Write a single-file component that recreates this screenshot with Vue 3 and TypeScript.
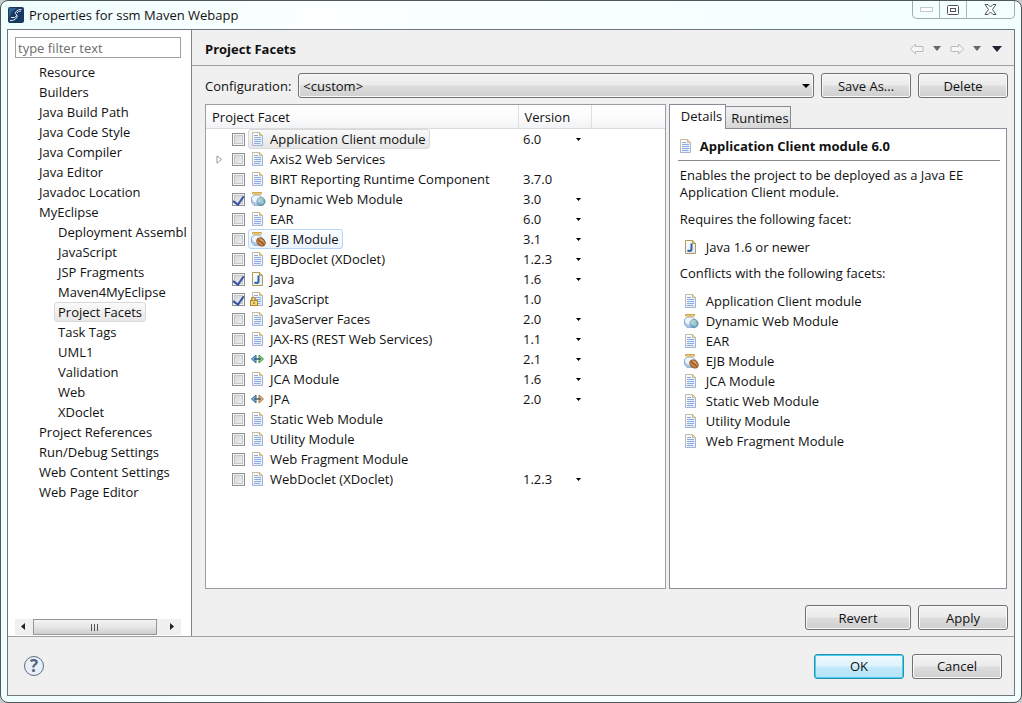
<script setup lang="ts">
import { ref } from 'vue'

interface TreeItem { name: string; level: 1 | 2; selected?: boolean }
interface Facet {
  name: string
  icon: string
  version?: string
  choice?: boolean
  checked?: boolean
  expandable?: boolean
  mark?: 'selected' | 'hover'
}

const tree: TreeItem[] = [
  { name: 'Resource', level: 1 },
  { name: 'Builders', level: 1 },
  { name: 'Java Build Path', level: 1 },
  { name: 'Java Code Style', level: 1 },
  { name: 'Java Compiler', level: 1 },
  { name: 'Java Editor', level: 1 },
  { name: 'Javadoc Location', level: 1 },
  { name: 'MyEclipse', level: 1 },
  { name: 'Deployment Assembl', level: 2 },
  { name: 'JavaScript', level: 2 },
  { name: 'JSP Fragments', level: 2 },
  { name: 'Maven4MyEclipse', level: 2 },
  { name: 'Project Facets', level: 2, selected: true },
  { name: 'Task Tags', level: 2 },
  { name: 'UML1', level: 2 },
  { name: 'Validation', level: 2 },
  { name: 'Web', level: 2 },
  { name: 'XDoclet', level: 2 },
  { name: 'Project References', level: 1 },
  { name: 'Run/Debug Settings', level: 1 },
  { name: 'Web Content Settings', level: 1 },
  { name: 'Web Page Editor', level: 1 },
]

const facets = ref<Facet[]>([
  { name: 'Application Client module', icon: 'doc', version: '6.0', choice: true, mark: 'selected' },
  { name: 'Axis2 Web Services', icon: 'doc', expandable: true },
  { name: 'BIRT Reporting Runtime Component', icon: 'doc', version: '3.7.0' },
  { name: 'Dynamic Web Module', icon: 'web', version: '3.0', choice: true, checked: true },
  { name: 'EAR', icon: 'doc', version: '6.0', choice: true },
  { name: 'EJB Module', icon: 'ejb', version: '3.1', choice: true, mark: 'hover' },
  { name: 'EJBDoclet (XDoclet)', icon: 'doc', version: '1.2.3', choice: true },
  { name: 'Java', icon: 'java', version: '1.6', choice: true, checked: true },
  { name: 'JavaScript', icon: 'lock', version: '1.0', checked: true },
  { name: 'JavaServer Faces', icon: 'doc', version: '2.0', choice: true },
  { name: 'JAX-RS (REST Web Services)', icon: 'doc', version: '1.1', choice: true },
  { name: 'JAXB', icon: 'jaxb', version: '2.1', choice: true },
  { name: 'JCA Module', icon: 'doc', version: '1.6', choice: true },
  { name: 'JPA', icon: 'jpa', version: '2.0', choice: true },
  { name: 'Static Web Module', icon: 'doc' },
  { name: 'Utility Module', icon: 'doc' },
  { name: 'Web Fragment Module', icon: 'doc' },
  { name: 'WebDoclet (XDoclet)', icon: 'doc', version: '1.2.3', choice: true },
])

const conflicts = [
  { name: 'Application Client module', icon: 'doc' },
  { name: 'Dynamic Web Module', icon: 'web' },
  { name: 'EAR', icon: 'doc' },
  { name: 'EJB Module', icon: 'ejb' },
  { name: 'JCA Module', icon: 'doc' },
  { name: 'Static Web Module', icon: 'doc' },
  { name: 'Utility Module', icon: 'doc' },
  { name: 'Web Fragment Module', icon: 'doc' },
]

const filter = ref('')
</script>

<template>
  <svg class="sprite" aria-hidden="true">
    <defs>
      <linearGradient id="page" x1="0" y1="0" x2="1" y2="1">
        <stop offset="0" stop-color="#ffffff" /><stop offset="1" stop-color="#dce8f8" />
      </linearGradient>
      <radialGradient id="globe" cx=".35" cy=".3" r=".8">
        <stop offset="0" stop-color="#d8eef4" /><stop offset="1" stop-color="#4481a8" />
      </radialGradient>
      <symbol id="i-doc" viewBox="0 0 16 16">
        <path d="M2.5 1.5h7l3 3v10h-10z" fill="url(#page)" stroke="#a3b4d2" />
        <path d="M2.5 11V1.5h7" fill="none" stroke="#c6be9c" />
        <path d="M9.5 1.5v3h3z" fill="#f0e0ae" stroke="#cdba83" />
        <path d="M4 4.500h4M4 6.500h7M4 8.500h7M4 10.500h7M4 12.500h6" stroke="#8aaae0" />
      </symbol>
      <symbol id="i-jar" viewBox="0 0 16 16">
        <path d="M4.500 4L1.500 6.500v5l2.500 3h6l2-2v-6L9.500 4z" fill="#eef5fc" stroke="#8fa9c8" />
        <path d="M2 9l2 2 3 1 2 2.500H4.500L2 12z" fill="#a5c4e6" />
        <path d="M2.500 1.500h9v1.500h-9z" fill="#f9e7b4" stroke="#cfa74f" />
        <path d="M4.500 3.500h5" stroke="#dcb765" />
      </symbol>
      <symbol id="i-web" viewBox="0 0 16 16">
        <use href="#i-jar" />
        <circle cx="11" cy="10.500" r="4.200" fill="url(#globe)" stroke="#6796ad" stroke-width=".7" />
        <path d="M8.500 8.500l2-1.500 2 .5-1 2-2 .5zM11 12l2-1.500 1 .5-1.500 2.500z" fill="#a4d1b6" />
      </symbol>
      <symbol id="i-ejb" viewBox="0 0 16 16">
        <use href="#i-jar" />
        <ellipse cx="11" cy="11" rx="4.600" ry="3.500" transform="rotate(38 11 11)" fill="#c98546" stroke="#8f5a2e" />
        <path d="M8 8.500c1 2.500 4 1.500 5.500 5" fill="none" stroke="#6b3d20" />
        <path d="M10.500 8.300l2.700 2" stroke="#efbb82" />
      </symbol>
      <symbol id="i-java" viewBox="0 0 16 16">
        <path d="M2.500 1.500h7l3 3v10h-10z" fill="url(#page)" stroke="#b39a50" />
        <path d="M9.500 1.500v3h3z" fill="#e8d28f" stroke="#b39a50" />
        <path d="M8.500 4.500v5.300q0 2.200-1.900 2.200-1.300 0-2.100-.8" fill="none" stroke="#2d64a7" stroke-width="2" />
      </symbol>
      <symbol id="i-lock" viewBox="0 0 16 16">
        <use href="#i-doc" />
        <path d="M1.500 10V8.500Q1.500 6.500 3.500 6.500t2 2V10" fill="none" stroke="#b48a2a" stroke-width="1.300" />
        <rect x=".5" y="9.500" width="7" height="5" fill="#f5d675" stroke="#b48a2a" />
        <path d="M4 11v2" stroke="#765510" />
      </symbol>
      <symbol id="i-jaxb" viewBox="0 0 16 16">
        <path d="M6 4v8L1.500 8z" fill="#7fb2e4" stroke="#35688d" />
        <path d="M9 4v8l4.500-4z" fill="#8fd68a" stroke="#3b9346" />
        <path d="M4 8h7" stroke="#2f5c7c" stroke-width="1.500" />
      </symbol>
      <symbol id="i-jpa" viewBox="0 0 16 16">
        <path d="M6 4v8L1.500 8z" fill="#7fb2e4" stroke="#35688d" />
        <path d="M9 4v8l4.500-4z" fill="#e3bd84" stroke="#a7743c" />
        <path d="M4 8h7" stroke="#515f6b" stroke-width="1.500" />
      </symbol>
      <symbol id="i-back" viewBox="0 0 16 12">
        <path d="M1.500 6l5-5v2.500H14v5H6.500V11z" fill="#f7f7f7" stroke="#b9b9b9" />
      </symbol>
    </defs>
  </svg>

  <div class="window">
    <header class="titlebar">
      <svg class="logo" viewBox="0 0 16 16" aria-hidden="true">
        <rect width="16" height="16" rx="2" fill="#173963" />
        <path d="M1 1h8Q2 5 1 12z" fill="#315f91" />
        <path d="M13.500 2.500Q10 2 8 4.500T9 8q1 2-1.500 4T2 13.500M3 10.500q4 1 6-2M13 4q-3 0-4 2" fill="none" stroke="#dce9f4" />
      </svg>
      <h1>Properties for ssm Maven Webapp</h1>
      <div class="captions">
        <button class="cap" type="button" aria-label="Minimize" disabled>
          <svg width="13" height="5" viewBox="0 0 13 5"><rect x=".5" y=".5" width="12" height="4" fill="#fff" stroke="#c3cccd" /></svg>
        </button>
        <button class="cap" type="button" aria-label="Maximize">
          <svg width="12" height="10" viewBox="0 0 12 10"><rect x=".5" y=".5" width="11" height="9" rx="1" fill="#fff" stroke="#4d5558" /><rect x="3.500" y="3.500" width="5" height="3" fill="#fff" stroke="#4d5558" /></svg>
        </button>
        <button class="cap close" type="button" aria-label="Close">
          <svg width="13" height="11" viewBox="0 0 13 11"><path d="M1 .5h3L6.500 3 9 .5h3L8.500 5.500l3.500 5H9L6.500 8 4 10.500H1l3.500-5z" fill="#fff" stroke="#4d5558" /></svg>
        </button>
      </div>
    </header>

    <div class="frame">
      <div class="upper">
        <aside class="side">
          <input v-model="filter" class="filter" type="text" placeholder="type filter text" aria-label="Filter" />
          <ul class="tree" role="tree">
            <li v-for="item in tree" :key="item.name" role="treeitem" :aria-selected="!!item.selected" :class="{ deep: item.level === 2 }">
              <span :class="{ current: item.selected }">{{ item.name }}</span>
            </li>
          </ul>
          <div class="scroll" aria-hidden="true">
            <svg width="18" height="15" viewBox="0 0 18 15"><path d="M10 4v7L6 7.500z" fill="#222" /></svg>
            <div class="thumb"><i></i><i></i><i></i></div>
            <svg width="18" height="15" viewBox="0 0 18 15"><path d="M7 4v7l4-3.500z" fill="#222" /></svg>
          </div>
        </aside>

        <main class="page">
          <div class="heading">
            <h2>Project Facets</h2>
            <div class="nav">
              <button type="button" aria-label="Back"><svg width="16" height="12"><use href="#i-back" /></svg></button>
              <button type="button" aria-label="Back history"><svg width="8" height="5" viewBox="0 0 8 5"><path d="M0 0h8L4 5z" fill="#666" /></svg></button>
              <button type="button" aria-label="Forward"><svg class="flip" width="16" height="12"><use href="#i-back" /></svg></button>
              <button type="button" aria-label="Forward history"><svg width="8" height="5" viewBox="0 0 8 5"><path d="M0 0h8L4 5z" fill="#666" /></svg></button>
              <button type="button" aria-label="Menu"><svg width="10" height="6" viewBox="0 0 10 6"><path d="M0 0h10L5 6z" fill="#222233" /></svg></button>
            </div>
          </div>

          <div class="config">
            <label for="configuration">Configuration:</label>
            <div class="combo">
              <select id="configuration"><option>&lt;custom&gt;</option></select>
              <svg width="8" height="4" viewBox="0 0 8 4" aria-hidden="true"><path d="M0 0h8L4 4z" fill="#000" /></svg>
            </div>
            <button class="btn" type="button">Save As...</button>
            <button class="btn" type="button">Delete</button>
          </div>

          <div class="panes">
            <section class="facets">
              <table>
                <colgroup><col class="c-name" /><col class="c-version" /><col /></colgroup>
                <thead>
                  <tr><th scope="col">Project Facet</th><th scope="col">Version</th><td></td></tr>
                </thead>
                <tbody>
                  <tr v-for="(f, i) in facets" :key="f.name">
                    <td>
                      <div class="cell">
                        <button v-if="f.expandable" class="expander" type="button" aria-label="Expand">
                          <svg width="7" height="9" viewBox="0 0 7 9"><path d="M1 .8v7.400L5.500 4.500z" fill="#fff" stroke="#999" /></svg>
                        </button>
                        <span v-else class="expander"></span>
                        <input :id="'facet' + i" v-model="f.checked" type="checkbox" />
                        <label :for="'facet' + i" :class="f.mark">
                          <svg width="16" height="16" aria-hidden="true"><use :href="'#i-' + f.icon" /></svg>
                          <span>{{ f.name }}</span>
                        </label>
                      </div>
                    </td>
                    <td>
                      <div v-if="f.choice" class="version">
                        <select :aria-label="f.name + ' version'"><option>{{ f.version }}</option></select>
                        <svg width="5" height="3" viewBox="0 0 5 3" aria-hidden="true"><path d="M0 0h5L2.500 3z" fill="#000" /></svg>
                      </div>
                      <span v-else>{{ f.version }}</span>
                    </td>
                    <td></td>
                  </tr>
                </tbody>
              </table>
            </section>

            <section class="info">
              <div class="tabs" role="tablist">
                <button class="tab active" type="button" role="tab" aria-selected="true">Details</button>
                <button class="tab" type="button" role="tab" aria-selected="false">Runtimes</button>
              </div>
              <div class="details" role="tabpanel">
                <h3><svg width="16" height="16" aria-hidden="true"><use href="#i-doc" /></svg>Application Client module 6.0</h3>
                <p>Enables the project to be deployed as a Java EE Application Client module.</p>
                <p>Requires the following facet:</p>
                <ul>
                  <li><svg width="16" height="16" aria-hidden="true"><use href="#i-java" /></svg>Java 1.6 or newer</li>
                </ul>
                <p>Conflicts with the following facets:</p>
                <ul>
                  <li v-for="c in conflicts" :key="c.name">
                    <svg width="16" height="16" aria-hidden="true"><use :href="'#i-' + c.icon" /></svg>{{ c.name }}
                  </li>
                </ul>
              </div>
            </section>
          </div>

          <div class="actions">
            <button class="btn wide" type="button">Revert</button>
            <button class="btn" type="button">Apply</button>
          </div>
        </main>
      </div>

      <footer class="footer">
        <button class="help" type="button" aria-label="Help">?</button>
        <button class="btn primary" type="button">OK</button>
        <button class="btn" type="button">Cancel</button>
      </footer>
    </div>
  </div>
</template>

<style>
body {
  background: #c8cccc;
}
</style>

<style scoped>
* {
  box-sizing: border-box;
}

.sprite {
  position: absolute;
  width: 0;
  height: 0;
}

.window {
  display: flex;
  flex-direction: column;
  min-height: 100vh;
  padding: 0 6px 6px;
  border: 1px solid #4e585a;
  border-radius: 8px;
  background: linear-gradient(90deg, #effdfd, #fbffff 30%, #f3ffff);
  color: #111;
  font: 13px/20px "Open Sans", "Noto Sans", sans-serif;
}

button,
input,
select {
  margin: 0;
  padding: 0;
  border: 0;
  background: none;
  color: inherit;
  font: inherit;
}

h1,
h2,
h3,
p,
ul {
  margin: 0;
  padding: 0;
  font-size: inherit;
}

ul {
  list-style: none;
}

svg {
  display: block;
  flex: none;
}

.titlebar {
  display: flex;
  align-items: center;
  gap: 5px;
  height: 28px;
  padding-left: 1px;
}

.logo {
  width: 16px;
  height: 16px;
}

h1 {
  flex: 1;
  font-weight: 400;
}

.captions {
  display: flex;
  align-self: flex-start;
  height: 18px;
  border: 1px solid #9eacae;
  border-top: 0;
  border-radius: 0 0 5px 5px;
}

.cap {
  display: grid;
  place-items: center;
  width: 27px;
  border-right: 1px solid #a9b7b9;
}

.cap.close {
  width: 47px;
  border-right: 0;
}

.frame {
  display: flex;
  flex: 1;
  flex-direction: column;
  border: 1px solid #6e7779;
  background: #f0f0f0;
}

.upper {
  display: flex;
  flex: 1;
}

.side {
  display: flex;
  flex: none;
  flex-direction: column;
  width: 184px;
  padding: 7px 10px 1px 7px;
  border-right: 1px solid #868686;
  background: #fff;
}

.filter {
  height: 21px;
  padding-left: 2px;
  border: 1px solid #a0a0a0;
  background: #fff;
}

.filter::placeholder {
  color: #6d6d6d;
  opacity: 1;
}

.tree {
  flex: 1;
  margin-top: 4px;
  white-space: nowrap;
}

.tree li {
  height: 20px;
  padding-left: 20px;
}

.tree li.deep {
  padding-left: 39px;
}

.tree span {
  display: inline-block;
  padding: 0 3px;
  border: 1px solid transparent;
  border-radius: 3px;
  line-height: 18px;
}

.tree span.current {
  border-color: #d9d9d9;
  background: linear-gradient(#fafafa, #e7e7e7);
}

.scroll {
  display: flex;
  height: 16px;
  background: #f0f0f0;
}

.thumb {
  display: flex;
  flex: 1;
  align-items: center;
  justify-content: center;
  gap: 1px;
  margin-right: 6px;
  border: 1px solid #979797;
  background: linear-gradient(#f4f4f4, #e6e6e6 50%, #cdcdcd);
}

.thumb i {
  width: 2px;
  height: 7px;
  border-left: 1px solid #555;
}

.page {
  display: flex;
  flex: 1;
  flex-direction: column;
  min-width: 0;
}

.heading {
  display: flex;
  align-items: center;
  justify-content: space-between;
  height: 36px;
  padding: 2px 12px 0 13px;
  border-bottom: 1px solid #a0a0a0;
}

.nav {
  display: flex;
  align-items: center;
}

.nav button {
  display: grid;
  place-items: center;
  height: 16px;
  margin-left: 8px;
}

.nav button:last-child {
  margin-left: 11px;
}

.flip {
  transform: scaleX(-1);
}

.config {
  display: flex;
  gap: 7px;
  align-items: center;
  padding: 7px 6px 6px 13px;
}

.combo {
  display: grid;
  flex: 1;
  align-items: center;
}

.combo select,
.combo svg {
  grid-area: 1 / 1;
}

.combo svg {
  justify-self: end;
  margin-right: 4px;
  pointer-events: none;
}

.combo select,
.btn {
  height: 25px;
  border: 1px solid #707070;
  border-radius: 3px;
  background: linear-gradient(#f3f3f3, #ebebeb 48%, #dddddd 52%, #cfcfcf);
  box-shadow: inset 0 0 0 1px #f9f9f9;
}

.combo select {
  width: 100%;
  padding-left: 4px;
  appearance: none;
}

.btn {
  width: 90px;
}

.btn.wide {
  width: 106px;
}

.btn.primary {
  border-color: #2c8fae;
  background: linear-gradient(#eef8fc, #dff3fc 48%, #c4e9fa 52%, #b4e3f7);
  box-shadow: inset 0 0 0 1px #45d2f2;
}

.panes {
  display: flex;
  flex: 1;
  gap: 3px;
  padding: 0 7px 0 13px;
}

.facets {
  flex: 460 1 0;
  min-width: 0;
  border: 1px solid #9a9da3;
  background: #fff;
}

table {
  width: 100%;
  border-collapse: collapse;
  table-layout: fixed;
}

.c-name {
  width: 68%;
}

.c-version {
  width: 16%;
}

th,
td {
  padding: 0;
  text-align: left;
  font-weight: 400;
}

thead tr {
  height: 24px;
  background: linear-gradient(#fff, #fcfcfc 45%, #f1f2f4);
  box-shadow: inset 0 -1px #dcdcdc;
}

th {
  padding-left: 6px;
  border-right: 1px solid #dedfe1;
}

tbody td {
  height: 20px;
  padding-left: 5px;
}

tbody td:first-child {
  padding: 0;
}

.cell {
  display: flex;
  align-items: center;
  height: 20px;
}

.expander {
  width: 17px;
  margin: 0 0 0 9px;
}

.expander svg {
  margin-left: 1px;
}

.cell input {
  display: grid;
  place-items: center;
  width: 13px;
  height: 13px;
  border: 1px solid #8e8f8f;
  background: linear-gradient(135deg, #cdd0d4, #f5f5f5);
  box-shadow: inset 0 0 0 1px #f4f4f4, inset 0 0 0 2px #c4c8cc;
  appearance: none;
}

.cell input:checked::after {
  width: 5px;
  height: 9px;
  margin-bottom: 2px;
  border: solid #3a55a0;
  border-width: 0 2px 2px 0;
  content: "";
  transform: rotate(35deg);
}

.cell label {
  display: flex;
  align-items: center;
  height: 20px;
  margin-left: 3px;
  padding: 0 3px 0 0;
  border: 1px solid transparent;
  border-radius: 3px;
  white-space: nowrap;
}

.cell label svg {
  margin: 0 4px 0 1px;
}

.cell label.selected {
  border-color: #d9d9d9;
  background: linear-gradient(#fafafa, #e6e6e6);
}

.cell label.hover {
  border-color: #b8d6fb;
  background: linear-gradient(#fbfdff, #ebf3fd);
}

.version {
  display: grid;
  align-items: center;
}

.version select,
.version svg {
  grid-area: 1 / 1;
}

.version select {
  height: 20px;
  appearance: none;
}

.version svg {
  justify-self: end;
  margin-right: 10px;
  pointer-events: none;
}

.info {
  display: flex;
  flex: 339 1 0;
  flex-direction: column;
  min-width: 0;
}

.tabs {
  display: flex;
  align-items: flex-end;
}

.tab {
  height: 22px;
  padding: 0 1px 0 5px;
  border: 1px solid #898c95;
  border-bottom: 0;
  border-left: 0;
  background: linear-gradient(#f2f2f2, #e6e6e6 50%, #d5d5d5);
}

.tab.active {
  z-index: 1;
  height: 25px;
  margin-bottom: -1px;
  padding: 0 3px 2px 11px;
  border-left: 1px solid #898c95;
  background: #fff;
}

.details {
  flex: 1;
  padding: 7px 6px 8px 8px;
  border: 1px solid #898c95;
  background: #fff;
}

h3 {
  display: flex;
  gap: 6px;
  align-items: center;
  height: 25px;
  margin-bottom: 6px;
  padding: 0 0 4px;
  border-bottom: 1px solid #898989;
}

.details p {
  margin: 0 2px 10px;
  line-height: 17px;
}

.details ul {
  margin: -1px 0 8px 5px;
}

.details li {
  display: flex;
  gap: 7px;
  align-items: center;
  height: 20px;
}

.actions {
  display: flex;
  gap: 7px;
  justify-content: flex-end;
  padding: 16px 6px 6px;
}

.footer {
  display: flex;
  gap: 8px;
  align-items: center;
  height: 59px;
  padding: 0 12px 0 16px;
  border-top: 1px solid #a0a0a0;
}

.help {
  width: 20px;
  height: 20px;
  margin-right: auto;
  border: 1px solid #5f6b80;
  border-radius: 50%;
  background: #e9f0fa;
  color: #55637d;
  font-size: 17px;
  font-weight: 700;
  line-height: 18px;
}
</style>
